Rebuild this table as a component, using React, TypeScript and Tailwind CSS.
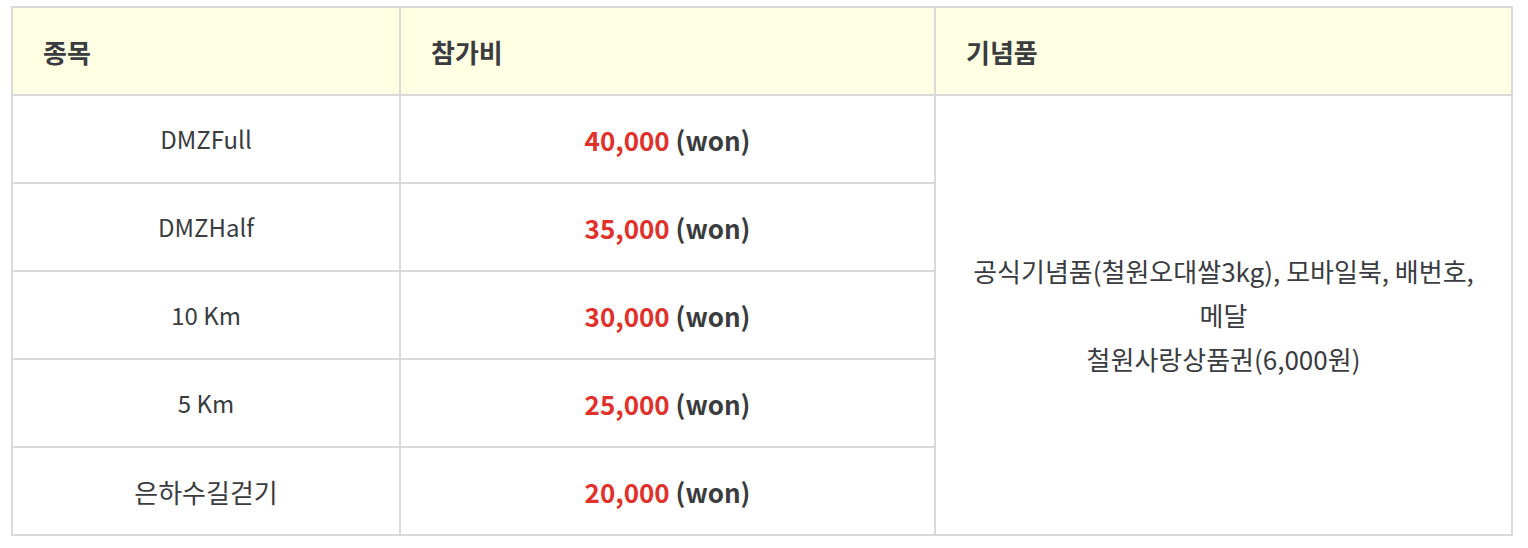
import React from "react";

const rows = [
  { name: "DMZFull", price: "40,000", ko: false },
  { name: "DMZHalf", price: "35,000", ko: false },
  { name: "10 Km", price: "30,000", ko: false },
  { name: "5 Km", price: "25,000", ko: false },
  { name: "은하수길걷기", price: "20,000", ko: true },
];

export default function App() {
  return (
    <div
      className="bg-white w-[1528px] h-[548px] pt-[6px] pl-[11px] text-[#3a3c40]"
      style={{ fontFamily: '"Noto Sans CJK KR", "Noto Sans", sans-serif' }}
    >
      <table className="w-[1500px] table-fixed border-collapse border-2 border-[#d9d9d9] text-[26px]">
        <colgroup>
          <col className="w-[388px]" />
          <col className="w-[535px]" />
          <col className="w-[577px]" />
        </colgroup>
        <thead>
          <tr className="bg-[#ffffe3] h-[88px]">
            <th className="border-2 border-[#d9d9d9] text-left pl-[30px] font-bold">종목</th>
            <th className="border-2 border-[#d9d9d9] text-left pl-[30px] font-bold">참가비</th>
            <th className="border-2 border-[#d9d9d9] text-left pl-[30px] font-bold">기념품</th>
          </tr>
        </thead>
        <tbody>
          {rows.map((r, i) => (
            <tr key={r.name} className="h-[88px]">
              <td className={`border-2 border-[#d9d9d9] text-center ${r.ko ? "text-[26px]" : "text-[24px]"}`}>
                {r.name}
              </td>
              <td className="border-2 border-[#d9d9d9] text-center font-bold">
                <span className="text-[#e2302a]">{r.price}</span> (won)
              </td>
              {i === 0 && (
                <td rowSpan={5} className="border-2 border-[#d9d9d9] text-center leading-[44px]">
                  공식기념품(철원오대쌀3kg), 모바일북, 배번호,
                  <br />
                  메달
                  <br />
                  철원사랑상품권(6,000원)
                </td>
              )}
            </tr>
          ))}
        </tbody>
      </table>
    </div>
  );
}
